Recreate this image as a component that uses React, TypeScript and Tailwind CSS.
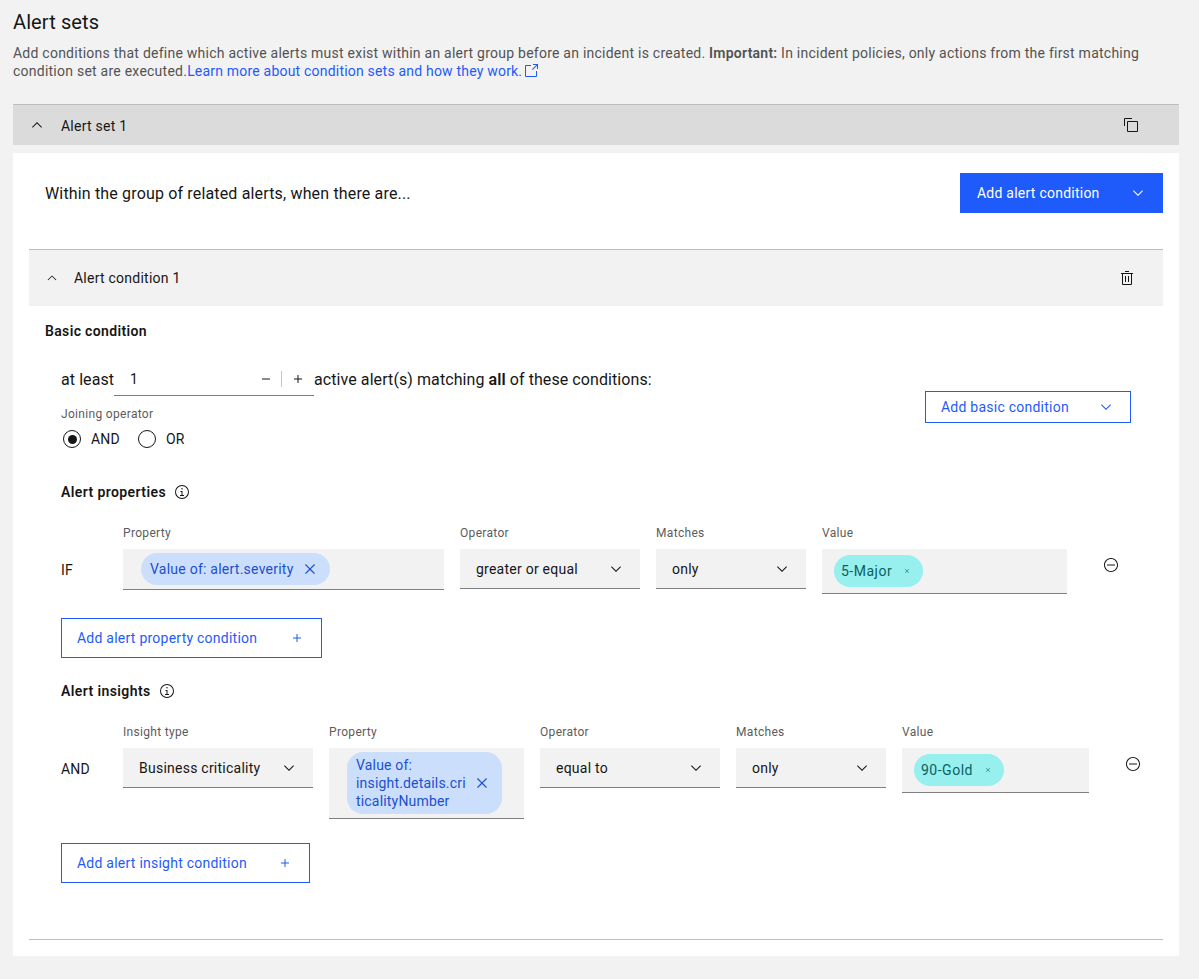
import type { ReactNode } from "react";

const BLUE = "text-[#1f5bfb]";

function Icon({ size = 16, className, children }: { size?: number; className?: string; children: ReactNode }) {
  return (
    <svg width={size} height={size} viewBox="0 0 32 32" fill="currentColor" className={`shrink-0 ${className ?? ""}`}>
      {children}
    </svg>
  );
}

const ChevronDown = ({ className }: { className?: string }) => (
  <Icon className={className}>
    <path d="M16 22L6 12 7.4 10.6 16 19.2 24.6 10.6 26 12z" />
  </Icon>
);

const ChevronUp = ({ size = 16 }: { size?: number }) => (
  <Icon size={size}>
    <path d="M16 10L26 20 24.6 21.4 16 12.8 7.4 21.4 6 20z" />
  </Icon>
);

const Add = ({ className }: { className?: string }) => (
  <Icon className={className}>
    <path d="M17 15L17 8 15 8 15 15 8 15 8 17 15 17 15 24 17 24 17 17 24 17 24 15 17 15z" />
  </Icon>
);

const Close = ({ size = 20 }: { size?: number }) => (
  <Icon size={size}>
    <path d="M24 9.4L22.6 8 16 14.6 9.4 8 8 9.4 14.6 16 8 22.6 9.4 24 16 17.4 22.6 24 24 22.6 17.4 16 24 9.4z" />
  </Icon>
);

const Info = () => (
  <Icon className="text-[#161616]">
    <path d="M17 22L17 14 13 14 13 16 15 16 15 22 12 22 12 24 20 24 20 22 17 22zM16 8a1.5 1.5 0 101.5 1.5A1.5 1.5 0 0016 8z" />
    <path d="M16,30A14,14,0,1,1,30,16,14,14,0,0,1,16,30ZM16,4A12,12,0,1,0,28,16,12,12,0,0,0,16,4Z" />
  </Icon>
);

const RemoveRow = () => (
  <Icon className="ml-9 mt-8 text-[#161616]">
    <path d="M16,4c6.6,0,12,5.4,12,12s-5.4,12-12,12S4,22.6,4,16S9.4,4,16,4 M16,2C8.3,2,2,8.3,2,16s6.3,14,14,14s14-6.3,14-14S23.7,2,16,2z" />
    <path d="M8 15H24V17H8z" />
  </Icon>
);

function Field({ label, width, children }: { label: string; width: string; children: ReactNode }) {
  return (
    <div className={`flex flex-col gap-2 ${width}`}>
      <div className="h-4 text-xs leading-4 tracking-[0.32px] text-[#5c5c5c]">{label}</div>
      {children}
    </div>
  );
}

function SelectBox({ value }: { value: string }) {
  return (
    <div className="flex h-10 items-center justify-between border-b border-[#7f7f7f] bg-[#f2f2f2] px-4 text-sm text-[#161616]">
      <span>{value}</span>
      <ChevronDown />
    </div>
  );
}

function BlueTag({ children }: { children: ReactNode }) {
  return (
    <div className="flex min-h-8 w-fit items-center gap-[6px] rounded-2xl bg-[#cbdffc] py-1 pl-[9px] pr-[10px] text-sm leading-[18px] text-[#1c4fd0]">
      <div>{children}</div>
      <Close />
    </div>
  );
}

function TealTag({ label }: { label: string }) {
  return (
    <div className="flex h-8 w-fit items-center gap-[11px] rounded-2xl bg-[#97efee] pl-[7px] pr-3 text-sm tracking-[0.5px] text-[#0b5f5f]">
      <span>{label}</span>
      <Close size={8} />
    </div>
  );
}

function OutlineButton({ label, width, className, icon }: { label: string; width: string; className?: string; icon: ReactNode }) {
  return (
    <button className={`flex items-center justify-between border border-[#1f5bfb] bg-white pl-[15px] pr-4 text-sm ${BLUE} ${width} ${className ?? ""}`}>
      <span>{label}</span>
      {icon}
    </button>
  );
}

function SectionTitle({ title }: { title: string }) {
  return (
    <div className="mt-6 flex h-[18px] items-center gap-2 text-sm font-semibold leading-[18px] tracking-[0.4px] text-[#161616]">
      {title}
      <Info />
    </div>
  );
}

export default function App() {
  return (
    <div
      className="min-h-[979px] bg-[#f2f2f2] pl-[13px] pr-5 pt-2 tracking-[0.24px] text-[#161616]"
      style={{ fontFamily: "Roboto, sans-serif" }}
    >
      <h1 className="text-xl leading-7 tracking-[0.1px]">Alert sets</h1>
      <p className="mt-2 text-sm leading-[18px] text-[#525252]">
        Add conditions that define which active alerts must exist within an alert group before an incident is created.{" "}
        <b className="font-semibold">Important:</b> In incident policies, only actions from the first matching
        <br />
        condition set are executed.
        <span className={`tracking-[0.2px] ${BLUE}`}>
          Learn more about condition sets and how they work.
          <svg width="16" height="16" viewBox="0 0 32 32" fill="currentColor" className="-my-1 ml-[1px] inline-block align-[1px]">
            <path d="M26,28H6a2.0023,2.0023,0,0,1-2-2V6A2.0023,2.0023,0,0,1,6,4H16V6H6V26H26V16h2V26A2.0023,2.0023,0,0,1,26,28Z" />
            <path d="M20 2L20 4 26.586 4 18 12.586 19.414 14 28 5.414 28 12 30 12 30 2 20 2z" />
          </svg>
        </span>
      </p>

      <div className="mt-6 flex h-[41px] items-center justify-between border-t border-[#bdbdbd] bg-[#dbdbdb] pl-4 pr-10 text-sm">
        <div className="flex items-center gap-4">
          <ChevronUp />
          <span className="pt-px">Alert set 1</span>
        </div>
        <Icon>
          <path d="M28,10V28H10V10H28m0-2H10a2,2,0,0,0-2,2V28a2,2,0,0,0,2,2H28a2,2,0,0,0,2-2V10a2,2,0,0,0-2-2Z" />
          <path d="M4,18H2V4A2,2,0,0,1,4,2H18V4H4Z" />
        </Icon>
      </div>

      <div className="mt-2 h-[803px] bg-white px-4 pt-5">
        <div className="flex items-center justify-between pl-4">
          <span className="pt-px text-base tracking-[0.16px]">Within the group of related alerts, when there are...</span>
          <button className="flex h-10 w-[203px] items-center justify-between bg-[#1f5bfb] pl-[17px] pr-[17px] text-sm text-white">
            <span>Add alert condition</span>
            <ChevronDown />
          </button>
        </div>

        <div className="mt-9 flex h-[57px] items-center justify-between border-t border-[#bdbdbd] bg-[#f2f2f2] pl-4 pr-7 text-sm">
          <div className="flex items-center gap-[15px]">
            <ChevronUp size={14} />
            <span>Alert condition 1</span>
          </div>
          <Icon>
            <path d="M12 12H14V24H12zM18 12H20V24H18z" />
            <path d="M4 6V8H6V28a2 2 0 002 2H24a2 2 0 002-2V8h2V6zM8 28V8H24V28zM12 2H20V4H12z" />
          </Icon>
        </div>

        <div className="mt-4 pl-4 text-sm font-semibold leading-[18px] tracking-[0.35px]">Basic condition</div>

        <div className="pl-8">
          <div className="mb-[34px] mt-4 flex items-start justify-between pr-8">
            <div>
              <div className="flex h-10 items-center whitespace-nowrap pt-[7px] text-base tracking-[0.08px]">
                <span className="w-[53px]">at least</span>
                <div className="flex h-[33px] w-[200px] items-center border-b border-[#7f7f7f] pl-4 text-sm">
                  <span className="flex-1">1</span>
                  <span className="ml-auto flex items-center">
                    <Icon>
                      <path d="M8 15H24V17H8z" />
                    </Icon>
                    <span className="ml-[7px] mr-2 h-4 w-px bg-[#c6c6c6]" />
                    <Add className="mr-2" />
                  </span>
                </div>
                <span>
                  active alert(s) matching <b className="font-semibold">all</b> of these conditions:
                </span>
              </div>
              <div className="mt-[10px] text-xs leading-4 tracking-[0.32px] text-[#5c5c5c]">Joining operator</div>
              <div className="mt-[7px] flex h-5 items-center pl-[2px] text-sm">
                <span className="flex h-[18px] w-[18px] items-center justify-center rounded-full border border-[#161616]">
                  <span className="h-[9px] w-[9px] rounded-full bg-[#161616]" />
                </span>
                <span className="ml-[10px] w-[47px]">AND</span>
                <span className="h-[18px] w-[18px] rounded-full border border-[#161616]" />
                <span className="ml-[10px]">OR</span>
              </div>
            </div>
            <OutlineButton label="Add basic condition" width="w-[206px]" className="mt-[35px] h-8" icon={<ChevronDown />} />
          </div>

          <SectionTitle title="Alert properties" />
          <div className="mt-6 flex items-start">
            <div className="mt-9 w-[62px] text-sm leading-[18px]">IF</div>
            <div className="flex gap-4">
              <Field label="Property" width="w-[321px]">
                <div className="h-[41px] border-b border-[#7f7f7f] bg-[#f2f2f2] pl-[18px] pt-1">
                  <BlueTag>Value of: alert.severity</BlueTag>
                </div>
              </Field>
              <Field label="Operator" width="w-[180px]">
                <SelectBox value="greater or equal" />
              </Field>
              <Field label="Matches" width="w-[150px]">
                <SelectBox value="only" />
              </Field>
              <Field label="Value" width="w-[245px]">
                <div className="h-[45px] border-b border-[#7f7f7f] bg-[#f2f2f2] pl-3 pt-[6px]">
                  <TealTag label="5-Major" />
                </div>
              </Field>
            </div>
            <RemoveRow />
          </div>
          <OutlineButton label="Add alert property condition" width="w-[261px]" className="mt-6 h-10" icon={<Add />} />

          <SectionTitle title="Alert insights" />
          <div className="mt-6 flex items-start">
            <div className="mt-9 w-[62px] text-sm leading-[18px]">AND</div>
            <div className="flex gap-4">
              <Field label="Insight type" width="w-[190px]">
                <SelectBox value="Business criticality" />
              </Field>
              <Field label="Property" width="w-[195px]">
                <div className="h-[71px] border-b border-[#7f7f7f] bg-[#f2f2f2] pl-[18px] pt-1">
                  <BlueTag>
                    <div className="w-[108px] tracking-[0.18px]">Value of:</div>
                    <div className="tracking-[0.18px]">insight.details.cri</div>
                    <div className="tracking-[0.18px]">ticalityNumber</div>
                  </BlueTag>
                </div>
              </Field>
              <Field label="Operator" width="w-[180px]">
                <SelectBox value="equal to" />
              </Field>
              <Field label="Matches" width="w-[150px]">
                <SelectBox value="only" />
              </Field>
              <Field label="Value" width="w-[187px]">
                <div className="h-[45px] border-b border-[#7f7f7f] bg-[#f2f2f2] pl-3 pt-[6px]">
                  <TealTag label="90-Gold" />
                </div>
              </Field>
            </div>
            <RemoveRow />
          </div>
          <OutlineButton label="Add alert insight condition" width="w-[249px]" className="mt-6 h-10" icon={<Add />} />
        </div>

        <div className="mt-14 h-px bg-[#bdbdbd]" />
      </div>
    </div>
  );
}
